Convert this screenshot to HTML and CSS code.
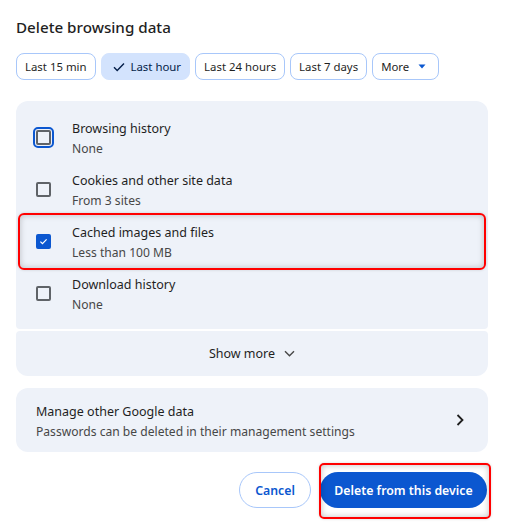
FILE: index.html
```html
<!DOCTYPE html>
<html>
<head>
<meta charset="utf-8">
<link rel="stylesheet" href="styles.css">
</head>
<body>
<div class="dialog">
  <h1 class="title">Delete browsing data</h1>
  <div class="chips">
    <div class="chip">Last 15 min</div>
    <div class="chip selected"><svg class="check" viewBox="0 0 12 10" width="12" height="10"><path d="M1 5.2l3.2 3.2L11 1.5" fill="none" stroke="#041e49" stroke-width="1.4"/></svg>Last hour</div>
    <div class="chip">Last 24 hours</div>
    <div class="chip">Last 7 days</div>
    <div class="chip more">More <svg class="caret" viewBox="0 0 8 5" width="8" height="5"><path d="M0.5 0.5h7L4 4.5z" fill="#0b57d0"/></svg></div>
  </div>

  <div class="panel list">
    <div class="row">
      <span class="box focused"></span>
      <div class="text"><div class="label">Browsing history</div><div class="sub">None</div></div>
    </div>
    <div class="row">
      <span class="box"></span>
      <div class="text"><div class="label">Cookies and other site data</div><div class="sub">From 3 sites</div></div>
    </div>
    <div class="row highlighted">
      <span class="box checked"><svg viewBox="0 0 16 16" width="13" height="13"><path d="M3.5 8.2l3 3 6-6.2" fill="none" stroke="#fff" stroke-width="1.8"/></svg></span>
      <div class="text"><div class="label">Cached images and files</div><div class="sub">Less than 100 MB</div></div>
    </div>
    <div class="row">
      <span class="box"></span>
      <div class="text"><div class="label">Download history</div><div class="sub">None</div></div>
    </div>
  </div>
  <div class="panel showmore">Show more <svg viewBox="0 0 11 7" width="11" height="7"><path d="M1 1.2l4.5 4.5 4.5-4.5" fill="none" stroke="#474747" stroke-width="1.4"/></svg></div>

  <div class="panel manage">
    <div class="text"><div class="label">Manage other Google data</div><div class="sub">Passwords can be deleted in their management settings</div></div>
    <svg class="chev" viewBox="0 0 8 12" width="8" height="12"><path d="M1.5 1l5 5-5 5" fill="none" stroke="#1f1f1f" stroke-width="1.8"/></svg>
  </div>

  <div class="actions">
    <button class="btn cancel">Cancel</button>
    <div class="mark"><button class="btn primary">Delete from this device</button></div>
  </div>
</div>
</body>
</html>
```

FILE: styles.css
```css
html, body { margin: 0; padding: 0; background: #fff; }
body { font-family: "Noto Sans", "Open Sans", sans-serif; color: #1f1f1f; min-height: 524px; }
.dialog { padding: 15px 17px 16px 16px; width: 472px; }
.title { font-size: 15.2px; font-weight: 500; margin: 0; line-height: 24px; color: #1f1f1f; }
.chips { display: flex; gap: 5px; margin-top: 14px; }
.chip { height: 25px; border: 1px solid #a8c7fa; border-radius: 8px; padding: 0 8px; font-size: 11.4px; line-height: 25px; display: flex; align-items: center; color: #1f1f1f; white-space: nowrap; }
.chip.selected { background: #d3e3fd; border-color: #d3e3fd; padding: 0 8px 0 11px; color: #041e49; }
.chip.selected .check { margin-right: 6px; }
.chip.more { padding: 0 12px 0 8px; }
.chip.more .caret { margin-left: 9px; }
.panel { background: #eef2f9; }
.list { margin-top: 21px; border-radius: 12px 12px 4px 4px; padding: 10px 0; }
.row { display: flex; align-items: center; height: 52px; position: relative; }
.row .box { width: 15px; height: 15px; box-sizing: border-box; border: 2px solid #5f6368; border-radius: 2px; margin-left: 20px; margin-right: 21px; display: flex; align-items: center; justify-content: center; }
.box.focused { outline: 2px solid #0b57d0; outline-offset: 1px; border-radius: 2px; }
.box.checked { background: #0b57d0; border-color: #0b57d0; }
.text { display: flex; flex-direction: column; padding-top: 3px; }
.label { font-size: 12.5px; line-height: 20px; color: #1f1f1f; }
.sub { font-size: 12.1px; line-height: 19px; color: #474747; }
.highlighted::after { content: ""; position: absolute; left: 2px; right: 2px; top: -2px; bottom: -3px; border: 2px solid #ff0000; border-radius: 6px; box-shadow: inset 0 0 6px rgba(0,0,0,0.22), 0 0 3px rgba(0,0,0,0.15); }
.showmore { margin-top: 2px; height: 45px; border-radius: 4px 4px 12px 12px; display: flex; align-items: center; justify-content: center; gap: 9px; font-size: 12.5px; color: #1f1f1f; }
.manage { margin-top: 12px; height: 64px; border-radius: 12px; display: flex; align-items: center; justify-content: space-between; padding: 0 24px 0 20px; box-sizing: border-box; }
.manage .text { padding-top: 2px; }
.actions { display: flex; justify-content: flex-end; align-items: center; gap: 9px; margin-top: 20px; padding-right: 1px; }
.btn { font-family: inherit; font-size: 12.3px; font-weight: 600; height: 36px; border-radius: 18px; padding: 0 16px; cursor: pointer; }
.cancel { background: #fff; border: 1px solid #a8c7fa; color: #0b57d0; width: 72px; padding: 0; }
.primary { background: #0b57d0; border: none; color: #fff; width: 167px; padding: 0; }
.mark { position: relative; display: flex; }
.mark::after { content: ""; position: absolute; left: -1px; right: -4px; top: -9px; bottom: -11px; border: 2px solid #ff0000; border-radius: 5px; box-shadow: inset 0 0 6px rgba(0,0,0,0.25), 0 0 3px rgba(0,0,0,0.15); pointer-events: none; }
```
